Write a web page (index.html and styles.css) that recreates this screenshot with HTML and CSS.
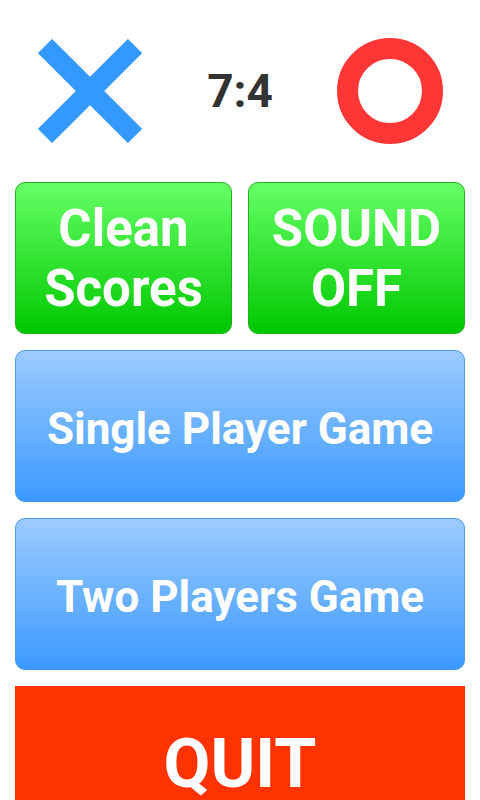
FILE: index.html
```html
<!DOCTYPE html>
<html>
<head>
  <title>Tic Tac Toe</title>
  <link rel="stylesheet" href="styles.css">
</head>
<body>
  <div id="menu">
    <div id="header">
      <div class="player">
        <svg width="104" height="104" viewBox="0 0 104 104">
          <line x1="7" y1="7" x2="97" y2="97" stroke="#3399ff" stroke-width="20"/>
          <line x1="97" y1="7" x2="7" y2="97" stroke="#3399ff" stroke-width="20"/>
        </svg>
      </div>
      <div id="score">7:4</div>
      <div class="player">
        <svg width="106" height="106" viewBox="0 0 106 106">
          <circle cx="53" cy="53" r="42.5" fill="none" stroke="#ff3636" stroke-width="21"/>
        </svg>
      </div>
    </div>

    <div id="options">
      <button class="green">Clean<br>Scores</button>
      <button class="green">SOUND<br>OFF</button>
    </div>
    <button class="blue">Single Player Game</button>
    <button class="blue">Two Players Game</button>
    <button id="quit">QUIT</button>
  </div>
</body>
</html>
```

FILE: styles.css
```css
body {
  font-family: Roboto, "Liberation Sans", sans-serif;
  background-color: #fff;
  margin: 0;
}
#menu {
  padding: 0 15px;
  display: flex;
  flex-direction: column;
  gap: 16px;
}
#header {
  display: grid;
  grid-template-columns: repeat(3, 1fr);
  align-items: center;
  justify-items: center;
  height: 150px;
  padding-top: 16px;
}
.player svg {
  display: block;
}
#score {
  font-size: 46px;
  font-weight: bold;
  color: #333;
}
#options {
  display: grid;
  grid-template-columns: 1fr 1fr;
  gap: 16px;
}
button {
  font-family: Roboto, "Liberation Sans", sans-serif;
  font-weight: bold;
  color: white;
  height: 152px;
  border-radius: 10px;
  cursor: pointer;
  padding: 0;
}
.green {
  font-size: 51px;
  line-height: 60px;
  padding-top: 2px;
  background: linear-gradient(#66ff66, #00c800);
  border: 1px solid #22b022;
}
.blue {
  font-size: 44px;
  padding-top: 5px;
  background: linear-gradient(#9ccbff, #3b9aff);
  border: 1px solid #4a98e8;
}
#quit {
  font-size: 68px;
  background-color: #ff3300;
  border: none;
  border-radius: 0;
  height: 156px;
}
```
